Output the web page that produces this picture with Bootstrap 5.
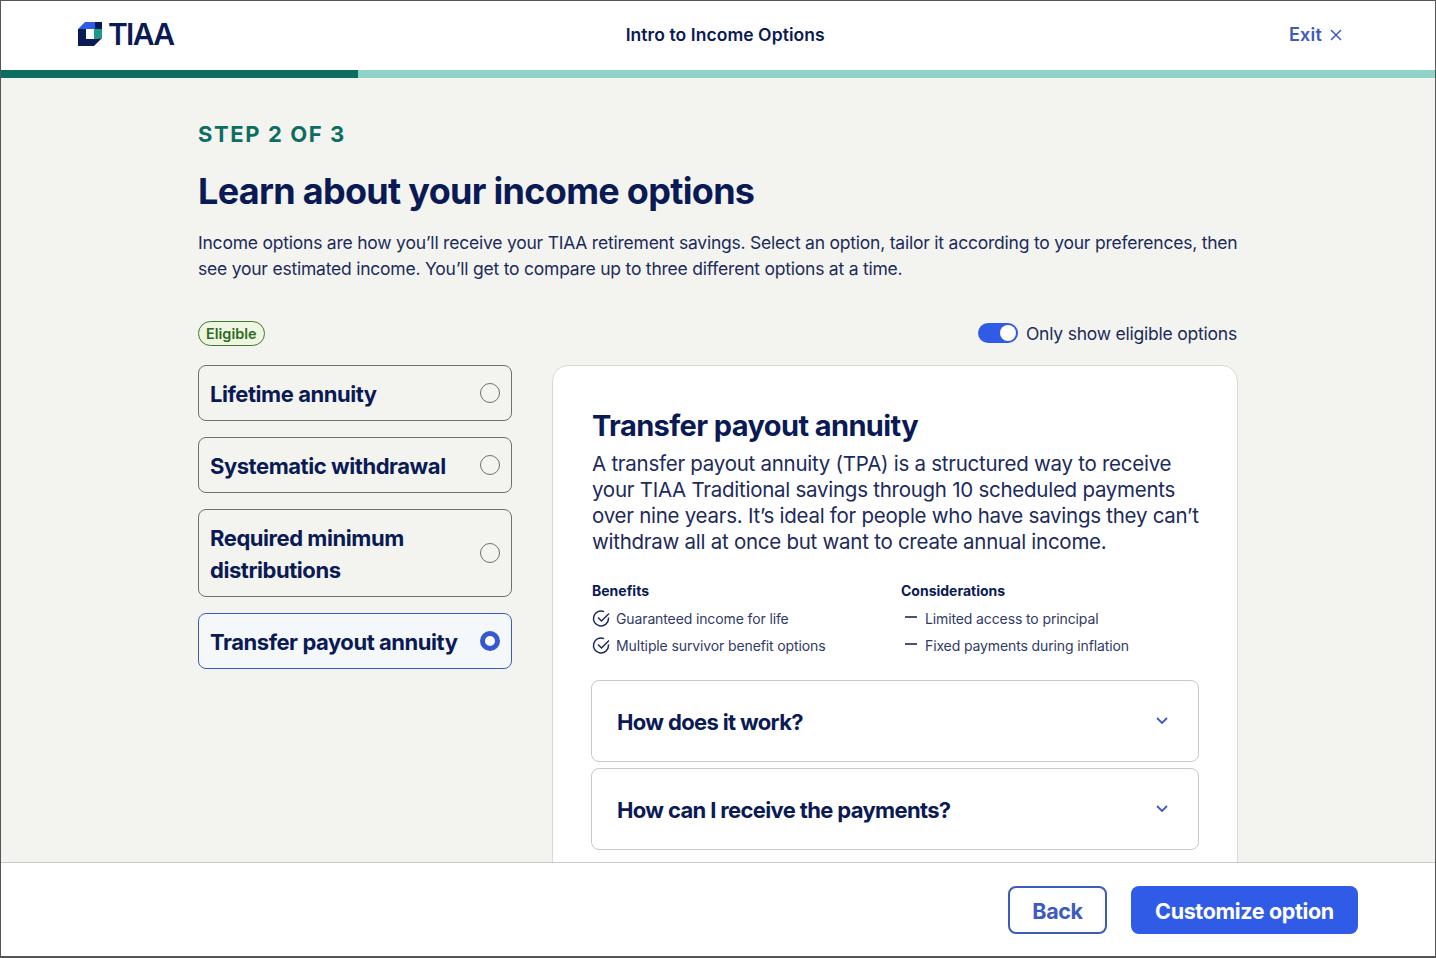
<!DOCTYPE html>
<html lang="en">
<head>
  <meta charset="UTF-8" />
  <meta name="viewport" content="width=device-width, initial-scale=1.0" />
  <title>Intro to Income Options</title>
  <link href="https://cdn.jsdelivr.net/npm/bootstrap@5.3.0/dist/css/bootstrap.min.css" rel="stylesheet" />
  <style>
    html, body { height: 100%; }
    body { font-family: Inter, "Liberation Sans", sans-serif; color: #0a1a55; overflow: hidden; }
    .app-frame { height: 958px; border: 1px solid #555; border-bottom-width: 2px; background: #fff; }
    .top-bar { height: 69px; padding: 0 93px 0 77px; flex: none; }
    .brand-block { margin-bottom: 4px; }
    .brand-word { font-size: 30px; font-weight: 600; letter-spacing: -1.7px; color: #0a1a55; line-height: 1; margin-left: 2px; }
    .top-title { font-size: 17.5px; font-weight: 600; letter-spacing: .07px; color: #0a1a55; margin-right: 12px; }
    .exit-link { font-size: 18px; font-weight: 600; letter-spacing: .2px; color: #3d5bbf; text-decoration: none; margin-bottom: 2px; }
    .progress-track { height: 8px; flex: none; background: #8ed3c8; }
    .progress-fill { width: 357px; height: 100%; background: #0c6e60; }
    .main-area { background: #f3f4ef; flex: 1 1 0; overflow: hidden; padding: 43px 197px 0; }
    .step-label { font-size: 22px; font-weight: 700; letter-spacing: 1.6px; color: #0c6e60; line-height: 27px; margin-bottom: 21px; }
    .page-title { font-size: 36px; font-weight: 700; letter-spacing: -.7px; color: #0a1a55; line-height: 44px; margin-bottom: 17px; }
    .intro-text { font-size: 17.5px; line-height: 26px; color: #1c2a5c; letter-spacing: -.22px; margin-bottom: 38px; }
    .eligible-tag { font-size: 14.5px; font-weight: 600; line-height: 23px; padding: 0 7px; color: #2f6a1f; background: #eef6e2; border: 1px solid #3f7a2c; border-radius: 13px; }
    .eligible-row { height: 26px; margin-bottom: 19px; padding-right: 1px; }
    .toggle-pill { width: 40px; height: 20px; border-radius: 10px; background: #2f5be7; position: relative; }
    .toggle-pill::after { content: ""; position: absolute; right: 2px; top: 2px; width: 16px; height: 16px; border-radius: 50%; background: #fff; }
    .toggle-text { font-size: 17.5px; color: #1c2a5c; letter-spacing: -.22px; margin-top: 2px; }
    .option-col { width: 314px; flex: none; gap: 16px; }
    .option-box { border: 1px solid #6f7070; border-radius: 8px; padding: 2px 11px 0; min-height: 56px; font-size: 22px; font-weight: 700; letter-spacing: -.45px; line-height: 32px; color: #0a1a55; }
    .option-box.tall { min-height: 88px; }
    .option-box.picked { border-color: #3d5bbf; background: #f5f8fb; }
    .radio-dot { width: 20px; height: 20px; flex: none; border: 1px solid #6f7070; border-radius: 50%; margin-bottom: 2px; }
    .picked .radio-dot { border: 5px solid #3557cf; background: #fff; }
    .detail-panel { width: 686px; flex: none; height: 620px; background: #fff; border: 1px solid #d9d9d3; border-radius: 16px 16px 0 0; padding: 40px 38px 0 39px; }
    .detail-title { font-size: 29px; font-weight: 700; letter-spacing: -.6px; line-height: 40px; margin: 0 0 5px; color: #0a1a55; }
    .detail-text { font-size: 20.5px; line-height: 26px; color: #1c2a5c; letter-spacing: -.26px; margin-bottom: 26px; }
    .benefit-col { width: 309px; flex: none; }
    .benefit-col + .benefit-col { width: 298px; }
    .list-block { margin-bottom: 21px; }
    .list-head { font-size: 14px; font-weight: 700; line-height: 20px; margin-bottom: 4px; color: #0a1a55; }
    .list-line { font-size: 14px; line-height: 27px; letter-spacing: -.12px; color: #2f3a66; gap: 5px; }
    .list-icon { width: 19px; height: 19px; flex: none; }
    .faq-row { border: 1px solid #c8c8c8; border-radius: 8px; height: 82px; padding: 2px 29px 0 25px; margin-left: -1px; font-size: 22px; font-weight: 700; letter-spacing: -.65px; color: #0a1a55; margin-bottom: 6px; }
    .faq-row svg { margin-bottom: 3px; }
    .bottom-bar { height: 94px; flex: none; background: #fff; border-top: 1px solid #c9c9c9; padding: 1px 77px 0 0; gap: 24px; }
    .btn-back, .btn-main { height: 48px; font-size: 21.5px; font-weight: 700; letter-spacing: -.35px; border-radius: 8px; display: flex; align-items: center; justify-content: center; padding: 2px 0 0; }
    .btn-back { width: 99px; color: #3d5bbf; border: 2px solid #3d5bbf; background: #fff; }
    .btn-main { width: 227px; color: #fff; background: #2f5be7; border: 0; }
  </style>
</head>
<body>
<div class="app-frame d-flex flex-column">

  <!-- Header -->
  <header class="top-bar d-flex align-items-center justify-content-between">
    <div class="brand-block d-flex align-items-center gap-1">
      <svg width="24" height="24" viewBox="0 0 24 24">
        <path d="M7 0H17V7H0Z" fill="#2f5be7"/>
        <path d="M17 0H24V7H17Z" fill="#0a1a55"/>
        <path d="M16 7H24V16L16 17Z" fill="#1d9a8a"/>
        <path d="M0 7H8V17H16L24 16L16 24H0Z" fill="#0a1a55"/>
      </svg>
      <span class="brand-word">TIAA</span>
    </div>
    <div class="top-title">Intro to Income Options</div>
    <a href="#" class="exit-link d-flex align-items-center gap-2">Exit
      <svg width="12" height="12" viewBox="0 0 12 12"><path d="M1 1L11 11M11 1L1 11" stroke="#3d5bbf" stroke-width="1.5" fill="none"/></svg>
    </a>
  </header>
  <div class="progress-track"><div class="progress-fill"></div></div>

  <!-- Content -->
  <main class="main-area">
    <div class="step-label">STEP 2 OF 3</div>
    <h1 class="page-title">Learn about your income options</h1>
    <p class="intro-text">Income options are how you’ll receive your TIAA retirement savings. Select an option, tailor it according to your preferences, then see your estimated income. You’ll get to compare up to three different options at a time.</p>

    <div class="eligible-row d-flex align-items-center justify-content-between">
      <span class="eligible-tag">Eligible</span>
      <div class="d-flex align-items-center gap-2">
        <div class="toggle-pill"></div>
        <span class="toggle-text">Only show eligible options</span>
      </div>
    </div>

    <div class="d-flex justify-content-between align-items-start">
      <div class="option-col d-flex flex-column">
        <div class="option-box d-flex align-items-center justify-content-between">Lifetime annuity<span class="radio-dot"></span></div>
        <div class="option-box d-flex align-items-center justify-content-between">Systematic withdrawal<span class="radio-dot"></span></div>
        <div class="option-box tall d-flex align-items-center justify-content-between"><span>Required minimum<br>distributions</span><span class="radio-dot"></span></div>
        <div class="option-box picked d-flex align-items-center justify-content-between">Transfer payout annuity<span class="radio-dot"></span></div>
      </div>

      <div class="detail-panel">
        <h2 class="detail-title">Transfer payout annuity</h2>
        <p class="detail-text">A transfer payout annuity (TPA) is a structured way to receive your TIAA Traditional savings through 10 scheduled payments over nine years. It’s ideal for people who have savings they can’t withdraw all at once but want to create annual income.</p>
        <div class="list-block d-flex">
          <div class="benefit-col">
            <div class="list-head">Benefits</div>
            <div class="list-line d-flex align-items-center">
              <svg class="list-icon" viewBox="0 0 19 19" fill="none" stroke="#1c2a5c" stroke-width="1.5"><path d="M16.5 8.5V9.5A7.5 7.5 0 1 1 12 2.6"/><path d="M6 8.5L9.5 12L17 4.5"/></svg>
              Guaranteed income for life</div>
            <div class="list-line d-flex align-items-center">
              <svg class="list-icon" viewBox="0 0 19 19" fill="none" stroke="#1c2a5c" stroke-width="1.5"><path d="M16.5 8.5V9.5A7.5 7.5 0 1 1 12 2.6"/><path d="M6 8.5L9.5 12L17 4.5"/></svg>
              Multiple survivor benefit options</div>
          </div>
          <div class="benefit-col">
            <div class="list-head">Considerations</div>
            <div class="list-line d-flex align-items-center">
              <svg class="list-icon" viewBox="0 0 19 19"><path d="M4 8H16" stroke="#1c2a5c" stroke-width="1.6"/></svg>
              Limited access to principal</div>
            <div class="list-line d-flex align-items-center">
              <svg class="list-icon" viewBox="0 0 19 19"><path d="M4 8H16" stroke="#1c2a5c" stroke-width="1.6"/></svg>
              Fixed payments during inflation</div>
          </div>
        </div>
        <div class="faq-row d-flex align-items-center justify-content-between">How does it work?
          <svg width="14" height="9" viewBox="0 0 14 9"><path d="M2 2L7 7L12 2" stroke="#3d5bbf" stroke-width="1.8" fill="none"/></svg>
        </div>
        <div class="faq-row d-flex align-items-center justify-content-between">How can I receive the payments?
          <svg width="14" height="9" viewBox="0 0 14 9"><path d="M2 2L7 7L12 2" stroke="#3d5bbf" stroke-width="1.8" fill="none"/></svg>
        </div>
      </div>
    </div>
  </main>

  <!-- Footer -->
  <footer class="bottom-bar d-flex align-items-center justify-content-end">
    <button class="btn btn-back">Back</button>
    <button class="btn btn-main">Customize option</button>
  </footer>
</div>
<script src="https://cdn.jsdelivr.net/npm/bootstrap@5.3.0/dist/js/bootstrap.bundle.min.js"></script>
</body>
</html>
